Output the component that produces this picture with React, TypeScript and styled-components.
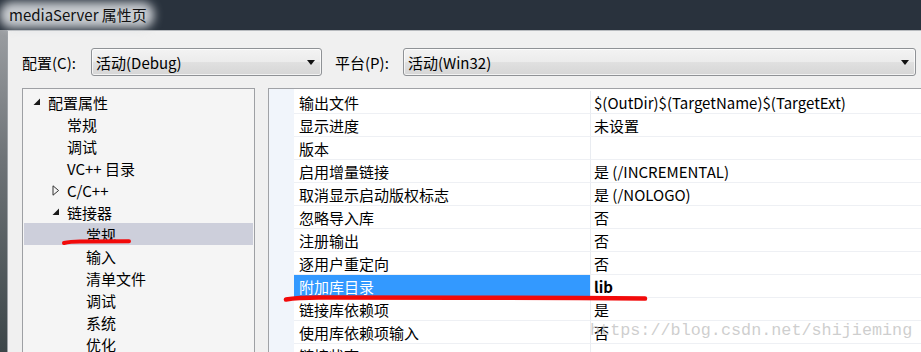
import React from 'react';
import styled, { createGlobalStyle } from 'styled-components';

const GlobalStyle = createGlobalStyle`
  html, body {
    margin: 0;
    padding: 0;
    background: #f0f0f0;
  }
  body {
    font-family: 'Noto Sans CJK SC', 'Noto Sans', sans-serif;
    font-size: 15px;
    color: #000;
  }
`;

const Window = styled.div`
  position: relative;
  width: 921px;
  height: 352px;
  overflow: hidden;
  display: flex;
  flex-direction: column;
  background: #29323d;
`;

const TitleBar = styled.div`
  height: 30px;
  flex: none;
  display: flex;
  align-items: center;
  padding-left: 9px;
  background: #29323d;
`;

const TitleText = styled.span`
  position: relative;
  z-index: 0;
  line-height: 20px;
  color: #111;
  white-space: nowrap;

  &::before {
    content: '';
    position: absolute;
    inset: -3px -7px -3px -9px;
    z-index: -1;
    border-radius: 12px;
    background: rgba(214, 217, 221, 0.92);
    filter: blur(5px);
  }
`;

const Body = styled.div`
  flex: 1;
  display: flex;
  min-height: 0;
`;

const FrameEdge = styled.div`
  width: 7px;
  flex: none;
  background: linear-gradient(#9a9da1, #6e7377 40%, #3c4649);
`;

const Client = styled.div`
  flex: 1;
  display: flex;
  flex-direction: column;
  min-width: 0;
  background: #f0f0f0;
  border-top: 1px solid #b7babe;
  border-left: 1px solid #9ea2a7;
  padding: 17px 0 0 14px;
`;

const ConfigRow = styled.div`
  display: flex;
  align-items: center;
  height: 28px;
  padding-right: 5px;
`;

const Label = styled.span<{ $width: number }>`
  width: ${(p) => p.$width}px;
  flex: none;
  white-space: nowrap;
`;

const Combo = styled.div<{ $width?: number }>`
  ${(p) => (p.$width ? `width: ${p.$width}px; flex: none;` : 'flex: 1;')}
  height: 28px;
  box-sizing: border-box;
  display: flex;
  align-items: center;
  justify-content: space-between;
  padding: 0 5px 0 4px;
  border: 1px solid #8f9296;
  border-radius: 3px;
  background: linear-gradient(#f3f3f3 0%, #ececec 48%, #e0e0e0 52%, #d6d6d6 100%);
  box-shadow: inset 0 0 0 1px rgba(255, 255, 255, 0.7);
`;

const Arrow = styled.span`
  width: 0;
  height: 0;
  border-left: 4.5px solid transparent;
  border-right: 4.5px solid transparent;
  border-top: 5px solid #111;
  margin-right: 1px;
`;

const Spacer = styled.div<{ $w: number }>`
  width: ${(p) => p.$w}px;
  flex: none;
`;

const Panels = styled.div`
  flex: 1;
  display: flex;
  gap: 13px;
  margin-top: 12px;
  min-height: 0;
`;

const Tree = styled.div`
  width: 233px;
  flex: none;
  box-sizing: border-box;
  border: 1px solid #9ea0a4;
  border-bottom: none;
  background: #f5f5f5;
  padding-top: 2px;
`;

const TreeItem = styled.div<{ $level: number; $selected?: boolean }>`
  height: 22px;
  margin: 0 1px;
  display: flex;
  align-items: center;
  padding-left: ${(p) => 5 + p.$level * 19}px;
  background: ${(p) => (p.$selected ? '#cdcfdb' : 'transparent')};
  white-space: nowrap;
`;

const Expander = styled.span`
  width: 19px;
  flex: none;
  display: flex;
  align-items: center;
  padding-left: 4px;
  box-sizing: border-box;
`;

const Grid = styled.div`
  flex: 1;
  min-width: 0;
  border-top: 1px solid #a0a2a6;
  border-left: 1px solid #a0a2a6;
  background: #fff;
  display: grid;
  grid-template-columns: 25px 297px 1fr;
  grid-auto-rows: 23px;
  align-content: start;
  padding-top: 2px;
  background: linear-gradient(90deg, #f1f5fb 25px, #fff 25px);
`;

const Gutter = styled.div`
  background: #f1f5fb;
`;

const NameCell = styled.div<{ $selected?: boolean }>`
  display: flex;
  align-items: center;
  padding-left: 5px;
  border-bottom: 1px solid #eef0f4;
  border-right: 1px solid #e9ecf1;
  background: ${(p) => (p.$selected ? '#3399ff' : '#fff')};
  color: ${(p) => (p.$selected ? '#fff' : '#000')};
  white-space: nowrap;
`;

const ValueCell = styled.div<{ $bold?: boolean }>`
  display: flex;
  align-items: center;
  padding-left: 3px;
  border-bottom: 1px solid #eef0f4;
  font-weight: ${(p) => (p.$bold ? 700 : 400)};
  white-space: nowrap;
  overflow: hidden;
`;

const Overlay = styled.svg`
  position: absolute;
  left: 0;
  top: 0;
  pointer-events: none;
`;

const Watermark = styled.div`
  position: absolute;
  left: 590px;
  top: 320px;
  font-family: 'Liberation Mono', 'DejaVu Sans Mono', monospace;
  font-size: 16.8px;
  line-height: 22px;
  color: rgba(190, 190, 190, 0.75);
  pointer-events: none;
  white-space: nowrap;
`;

const OpenIcon = () => (
  <svg width="8" height="8" viewBox="0 0 8 8">
    <polygon points="7,0.5 7,7 0.5,7" fill="#1a1a1a" />
  </svg>
);

const ClosedIcon = () => (
  <svg width="8" height="11" viewBox="0 0 8 11">
    <polygon points="1,0.8 6.6,5.5 1,10.2" fill="none" stroke="#333" strokeWidth="1" />
  </svg>
);

type TreeNode = { label: string; level: number; expander?: 'open' | 'closed'; selected?: boolean };

const treeNodes: TreeNode[] = [
  { label: '配置属性', level: 0, expander: 'open' },
  { label: '常规', level: 1 },
  { label: '调试', level: 1 },
  { label: 'VC++ 目录', level: 1 },
  { label: 'C/C++', level: 1, expander: 'closed' },
  { label: '链接器', level: 1, expander: 'open' },
  { label: '常规', level: 2, selected: true },
  { label: '输入', level: 2 },
  { label: '清单文件', level: 2 },
  { label: '调试', level: 2 },
  { label: '系统', level: 2 },
  { label: '优化', level: 2 },
];

type Prop = { name: string; value: string; selected?: boolean };

const props: Prop[] = [
  { name: '输出文件', value: '$(OutDir)$(TargetName)$(TargetExt)' },
  { name: '显示进度', value: '未设置' },
  { name: '版本', value: '' },
  { name: '启用增量链接', value: '是 (/INCREMENTAL)' },
  { name: '取消显示启动版权标志', value: '是 (/NOLOGO)' },
  { name: '忽略导入库', value: '否' },
  { name: '注册输出', value: '否' },
  { name: '逐用户重定向', value: '否' },
  { name: '附加库目录', value: 'lib', selected: true },
  { name: '链接库依赖项', value: '是' },
  { name: '使用库依赖项输入', value: '否' },
  { name: '链接状态', value: '' },
];

export default function App() {
  return (
    <>
      <GlobalStyle />
      <Window>
        <TitleBar>
          <TitleText>mediaServer 属性页</TitleText>
        </TitleBar>
        <Body>
          <FrameEdge />
          <Client>
            <ConfigRow>
              <Label $width={69}>配置(C):</Label>
              <Combo $width={231}>
                <span>活动(Debug)</span>
                <Arrow />
              </Combo>
              <Spacer $w={13} />
              <Label $width={68}>平台(P):</Label>
              <Combo>
                <span>活动(Win32)</span>
                <Arrow />
              </Combo>
            </ConfigRow>
            <Panels>
              <Tree>
                {treeNodes.map((n, i) => (
                  <TreeItem key={i} $level={n.level} $selected={n.selected}>
                    <Expander>
                      {n.expander === 'open' && <OpenIcon />}
                      {n.expander === 'closed' && <ClosedIcon />}
                    </Expander>
                    <span>{n.label}</span>
                  </TreeItem>
                ))}
              </Tree>
              <Grid>
                {props.map((p, i) => (
                  <React.Fragment key={i}>
                    <Gutter />
                    <NameCell $selected={p.selected}>{p.name}</NameCell>
                    <ValueCell $bold={p.selected}>{p.value}</ValueCell>
                  </React.Fragment>
                ))}
              </Grid>
            </Panels>
          </Client>
        </Body>
        <Watermark>https://blog.csdn.net/shijieming</Watermark>
        <Overlay width="921" height="352">
          <path
            d="M64 243 Q70 241.5 80 241.5 L129 241.2"
            stroke="#f20a0a"
            strokeWidth="4"
            strokeLinecap="round"
            fill="none"
          />
          <path
            d="M286 299.5 Q300 297 330 297.6 L460 297.8 Q560 297.5 645 298.6"
            stroke="#f20a0a"
            strokeWidth="4.5"
            strokeLinecap="round"
            fill="none"
          />
        </Overlay>
      </Window>
    </>
  );
}
